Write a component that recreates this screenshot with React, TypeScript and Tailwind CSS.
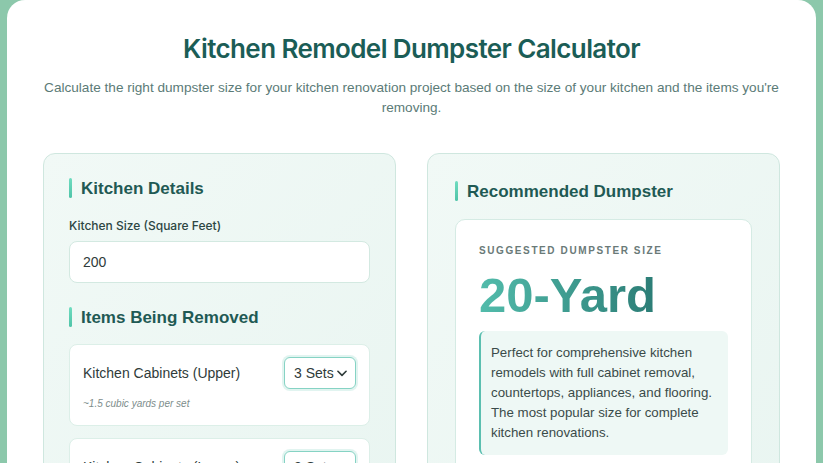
import React from "react";

const sans = { fontFamily: '"Liberation Sans", Arial, sans-serif' };

function Heading({ children }: { children: React.ReactNode }) {
  return (
    <div className="flex items-center gap-[9px]">
      <div className="w-[3px] h-[20px] rounded-sm bg-gradient-to-b from-[#6fdcc0] to-[#4fc4a8]" />
      <h2 className="text-[17px] font-bold text-[#1f5a54] leading-none" style={sans}>
        {children}
      </h2>
    </div>
  );
}

function ItemCard({ label, hint }: { label: string; hint: string }) {
  return (
    <div className="bg-white rounded-[8px] border border-[#dcefe8] px-[13px] pt-[12px] pb-[14px]">
      <div className="flex items-center justify-between">
        <span className="text-[14px] text-[#2f3b3a]" style={sans}>{label}</span>
        <div className="flex items-center gap-[1px] h-[32px] w-[72px] pl-[9px] rounded-[6px] border border-[#86d3c4] bg-white shadow-[0_0_0_2px_rgba(134,211,196,0.25)]">
          <span className="text-[14px] text-[#2f3b3a]" style={sans}>3 Sets</span>
          <svg width="14" height="14" viewBox="0 0 24 24" fill="none" stroke="#2f3b3a" strokeWidth="2.8" strokeLinecap="round" strokeLinejoin="round">
            <path d="M5 9l7 7 7-7" />
          </svg>
        </div>
      </div>
      <div className="mt-[7px] text-[10px] italic text-[#7d8d8b]" style={sans}>{hint}</div>
    </div>
  );
}

export default function App() {
  return (
    <div className="w-[823px] h-[463px] overflow-hidden bg-[#8cc8ab]">
      <div className="mx-[7px] h-[520px] bg-white rounded-t-[18px] pt-[31px] px-[36px]">
        <h1
          className="text-center text-[26px] font-semibold text-[#1b5d56] tracking-[-0.6px] leading-[36px]"
          style={{ fontFamily: 'Inter, "Noto Sans", sans-serif' }}
        >
          Kitchen Remodel Dumpster Calculator
        </h1>
        <p className="mt-[11px] -mx-[4px] text-center text-[13.6px] leading-[20px] text-[#5b7b77]" style={sans}>
          Calculate the right dumpster size for your kitchen renovation project based on the size of your kitchen and the items you're removing.
        </p>
        <div className="mt-[35px] grid grid-cols-2 gap-[31px]">
          <div className="rounded-[12px] border border-[#cfe7df] bg-gradient-to-br from-[#f1f9f6] to-[#e9f5f1] px-[25px] pt-[24px] pb-[20px]">
            <Heading>Kitchen Details</Heading>
            <div
              className="mt-[19px] text-[12px] font-medium text-[#2d4643]"
              style={{ fontFamily: 'Inter, "Noto Sans", sans-serif' }}
            >
              Kitchen Size (Square Feet)
            </div>
            <div className="mt-[6px] h-[42px] rounded-[8px] border border-[#d3e9e1] bg-white flex items-center px-[13px]">
              <span className="text-[14px] text-[#2f3b3a]" style={sans}>200</span>
            </div>
            <div className="mt-[24px]">
              <Heading>Items Being Removed</Heading>
            </div>
            <div className="mt-[17px] flex flex-col gap-[12px]">
              <ItemCard label="Kitchen Cabinets (Upper)" hint="~1.5 cubic yards per set" />
              <ItemCard label="Kitchen Cabinets (Lower)" hint="~2 cubic yards per set" />
            </div>
          </div>
          <div className="rounded-[12px] border border-[#cfe7df] bg-gradient-to-br from-[#f1f9f6] to-[#e9f5f1] px-[27px] pt-[27px] pb-[20px]">
            <Heading>Recommended Dumpster</Heading>
            <div className="mt-[18px] rounded-[10px] border border-[#d5ebe4] bg-white px-[23px] pt-[23px] pb-[20px]">
              <div className="text-[10px] font-bold tracking-[1.6px] text-[#6a7a78]" style={sans}>
                SUGGESTED DUMPSTER SIZE
              </div>
              <div
                className="mt-[9px] text-[49px] font-extrabold leading-[56px] bg-gradient-to-r from-[#52bcab] to-[#2c7d76] bg-clip-text text-transparent inline-block"
                style={sans}
              >
                20-Yard
              </div>
              <div className="mt-[8px] rounded-[6px] border-l-2 border-[#5bbfb0] bg-[#eef8f5] pl-[10px] pr-[12px] pt-[12px] pb-[12px]">
                <p className="text-[13.3px] leading-[20px] text-[#3a4b49]" style={sans}>
                  Perfect for comprehensive kitchen remodels with full cabinet removal, countertops, appliances, and flooring. The most popular size for complete kitchen renovations.
                </p>
              </div>
            </div>
          </div>
        </div>
      </div>
    </div>
  );
}
